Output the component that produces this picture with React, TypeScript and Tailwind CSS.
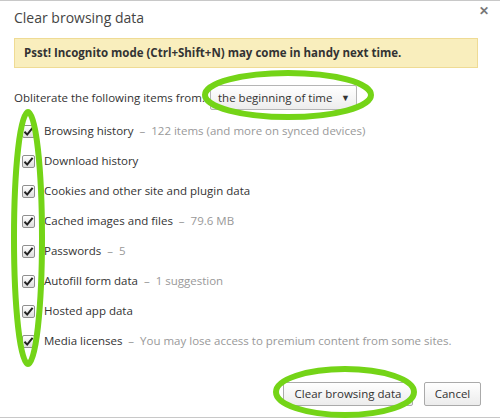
import React from "react";

const items: { label: string; note?: string }[] = [
  { label: "Browsing history", note: "122 items (and more on synced devices)" },
  { label: "Download history" },
  { label: "Cookies and other site and plugin data" },
  { label: "Cached images and files", note: "79.6 MB" },
  { label: "Passwords", note: "5" },
  { label: "Autofill form data", note: "1 suggestion" },
  { label: "Hosted app data" },
  { label: "Media licenses", note: "You may lose access to premium content from some sites." },
];

const CheckBox = () => (
  <span className="w-[13px] h-[13px] shrink-0 border border-[#8f8f8f] rounded-[2px] bg-gradient-to-b from-white to-[#dcdcdc] flex items-center justify-center">
    <svg width="11" height="11" viewBox="0 0 11 11">
      <path d="M1.5 5.8 L4.2 8.6 L9.6 1.8" fill="none" stroke="#222" strokeWidth="2" />
    </svg>
  </span>
);

const App = () => {
  return (
    <div
      className="relative w-[500px] h-[419px] bg-white overflow-hidden text-[#333]"
      style={{ fontFamily: '"Open Sans", "Liberation Sans", sans-serif' }}
    >
      <div className="h-[418px] border-t border-b border-[#c8c8c8]">
        {/* header */}
        <div className="flex justify-between pl-[14px] pr-[11px] pt-[7px]">
          <h1 className="text-[14px] leading-[20px] text-[#444]">Clear browsing data</h1>
          <span className="text-[12px] leading-[6px] text-[#777] font-bold">✕</span>
        </div>

        {/* incognito tip */}
        <div className="ml-[14px] mr-[22px] mt-[10px] h-[30px] flex items-center px-[9px] bg-[#f9eebd] border border-[#efdb94] text-[11.5px] font-bold text-[#333]">
          Psst! Incognito mode (Ctrl+Shift+N) may come in handy next time.
        </div>

        {/* period */}
        <div className="flex items-center pl-[14px] mt-[17px] h-[25px] text-[11.5px]">
          <span className="w-[196px] shrink-0">Obliterate the following items from:</span>
          <div className="w-[147px] h-[25px] flex items-center justify-between pl-[7px] pr-[6px] border border-[#b5b5b5] rounded-[2px] bg-gradient-to-b from-white to-[#ededed]">
            <span>the beginning of time</span>
            <span className="text-[9px]">▼</span>
          </div>
        </div>

        {/* items */}
        <div className="mt-[6px]">
          {items.map((it) => (
            <div key={it.label} className="h-[30px] flex items-center pl-[22px] gap-[9px] text-[11.5px] whitespace-nowrap">
              <CheckBox />
              <span>
                {it.label}
                {it.note && (
                  <span className="text-[#999]">
                    {"\u00a0\u00a0–\u00a0\u00a0"}
                    {it.note}
                  </span>
                )}
              </span>
            </div>
          ))}
        </div>

        {/* buttons */}
        <div className="flex justify-end gap-[11px] pr-[19px] mt-[26px]">
          <button className="w-[130px] h-[24px] border border-[#aaa] rounded-[2px] bg-gradient-to-b from-white to-[#ececec] text-[11.5px] text-[#333]">
            Clear browsing data
          </button>
          <button className="w-[57px] h-[24px] border border-[#aaa] rounded-[2px] bg-gradient-to-b from-white to-[#ececec] text-[11.5px] text-[#333]">
            Cancel
          </button>
        </div>
      </div>

      {/* green annotation marks */}
      <svg className="absolute inset-0 pointer-events-none" width="500" height="419" viewBox="0 0 500 419">
        <g fill="none" stroke="#74d417" strokeWidth="6">
          <ellipse cx="288" cy="95" rx="83" ry="22" />
          <ellipse cx="28" cy="238" rx="14" ry="126" />
          <ellipse cx="345" cy="392" rx="69" ry="23" />
        </g>
      </svg>
    </div>
  );
};

export default App;
